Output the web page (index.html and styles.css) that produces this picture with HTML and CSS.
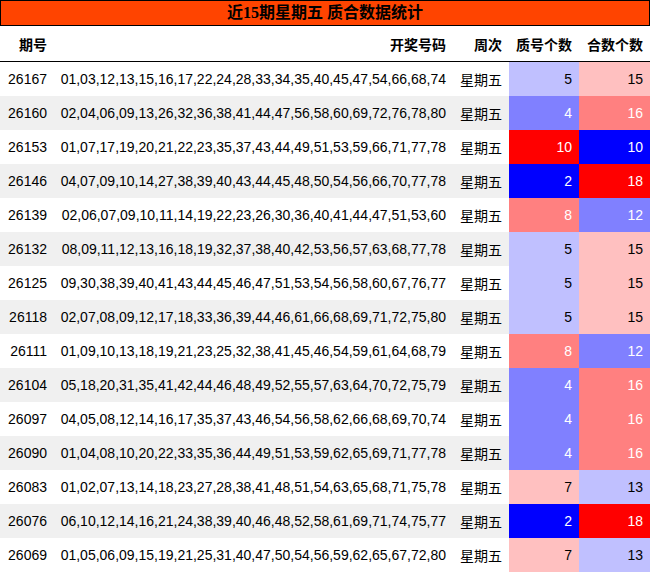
FILE: index.html
```html
<!DOCTYPE html>
<html lang="zh">
<head>
<meta charset="utf-8">
<title>近15期星期五 质合数据统计</title>
<link rel="stylesheet" href="styles.css">
</head>
<body>
<div class="wrap">
  <div class="title">近15期星期五 质合数据统计</div>
  <table class="grid">
    <colgroup>
      <col class="c-qi"><col class="c-num"><col class="c-wk"><col class="c-p"><col class="c-h">
    </colgroup>
    <thead>
      <tr><th>期号</th><th>开奖号码</th><th>周次</th><th>质号个数</th><th>合数个数</th></tr>
    </thead>
    <tbody>
      <tr><td>26167</td><td>01,03,12,13,15,16,17,22,24,28,33,34,35,40,45,47,54,66,68,74</td><td>星期五</td><td class="lb">5</td><td class="lr">15</td></tr>
      <tr><td>26160</td><td>02,04,06,09,13,26,32,36,38,41,44,47,56,58,60,69,72,76,78,80</td><td>星期五</td><td class="mb">4</td><td class="mr">16</td></tr>
      <tr><td>26153</td><td>01,07,17,19,20,21,22,23,35,37,43,44,49,51,53,59,66,71,77,78</td><td>星期五</td><td class="dr">10</td><td class="db">10</td></tr>
      <tr><td>26146</td><td>04,07,09,10,14,27,38,39,40,43,44,45,48,50,54,56,66,70,77,78</td><td>星期五</td><td class="db">2</td><td class="dr">18</td></tr>
      <tr><td>26139</td><td>02,06,07,09,10,11,14,19,22,23,26,30,36,40,41,44,47,51,53,60</td><td>星期五</td><td class="mr">8</td><td class="mb">12</td></tr>
      <tr><td>26132</td><td>08,09,11,12,13,16,18,19,32,37,38,40,42,53,56,57,63,68,77,78</td><td>星期五</td><td class="lb">5</td><td class="lr">15</td></tr>
      <tr><td>26125</td><td>09,30,38,39,40,41,43,44,45,46,47,51,53,54,56,58,60,67,76,77</td><td>星期五</td><td class="lb">5</td><td class="lr">15</td></tr>
      <tr><td>26118</td><td>02,07,08,09,12,17,18,33,36,39,44,46,61,66,68,69,71,72,75,80</td><td>星期五</td><td class="lb">5</td><td class="lr">15</td></tr>
      <tr><td>26111</td><td>01,09,10,13,18,19,21,23,25,32,38,41,45,46,54,59,61,64,68,79</td><td>星期五</td><td class="mr">8</td><td class="mb">12</td></tr>
      <tr><td>26104</td><td>05,18,20,31,35,41,42,44,46,48,49,52,55,57,63,64,70,72,75,79</td><td>星期五</td><td class="mb">4</td><td class="mr">16</td></tr>
      <tr><td>26097</td><td>04,05,08,12,14,16,17,35,37,43,46,54,56,58,62,66,68,69,70,74</td><td>星期五</td><td class="mb">4</td><td class="mr">16</td></tr>
      <tr><td>26090</td><td>01,04,08,10,20,22,33,35,36,44,49,51,53,59,62,65,69,71,77,78</td><td>星期五</td><td class="mb">4</td><td class="mr">16</td></tr>
      <tr><td>26083</td><td>01,02,07,13,14,18,23,27,28,38,41,48,51,54,63,65,68,71,75,78</td><td>星期五</td><td class="lr">7</td><td class="lb">13</td></tr>
      <tr><td>26076</td><td>06,10,12,14,16,21,24,38,39,40,46,48,52,58,61,69,71,74,75,77</td><td>星期五</td><td class="db">2</td><td class="dr">18</td></tr>
      <tr><td>26069</td><td>01,05,06,09,15,19,21,25,31,40,47,50,54,56,59,62,65,67,72,80</td><td>星期五</td><td class="lr">7</td><td class="lb">13</td></tr>
    </tbody>
  </table>
</div>
</body>
</html>
```
FILE: styles.css
```css
html, body {
  margin: 0;
  padding: 0;
  background: #ffffff;
}

.wrap {
  width: 650px;
}

.title {
  box-sizing: border-box;
  height: 26px;
  border: 1px solid #000000;
  background: #ff4400;
  color: #000000;
  font-family: "Liberation Serif", "Noto Sans CJK SC", serif;
  font-weight: bold;
  font-size: 16px;
  line-height: 23px;
  text-align: center;
}

.grid {
  width: 650px;
  border-collapse: collapse;
  table-layout: fixed;
  font-family: "Liberation Sans", "Noto Sans CJK SC", sans-serif;
  font-size: 14px;
  color: #000000;
}

.c-qi { width: 54px; }
.c-num { width: 399px; }
.c-wk { width: 56px; }
.c-p { width: 70px; }
.c-h { width: 71px; }

.grid th {
  height: 35px;
  padding: 0 7px 0 0;
  text-align: right;
  font-weight: bold;
  border-bottom: 1px solid #000000;
  vertical-align: middle;
  white-space: nowrap;
}

.grid td {
  height: 34px;
  padding: 0 7px 0 0;
  text-align: right;
  vertical-align: middle;
  white-space: nowrap;
}

.grid tbody tr:nth-child(even) {
  background: #f0f0f0;
}

.grid td.lb { background: #c0c0ff; color: #000000; }
.grid td.lr { background: #ffc0c0; color: #000000; }
.grid td.mb { background: #8080ff; color: #ffffff; }
.grid td.mr { background: #ff8080; color: #ffffff; }
.grid td.db { background: #0000ff; color: #ffffff; }
.grid td.dr { background: #ff0000; color: #ffffff; }
```
